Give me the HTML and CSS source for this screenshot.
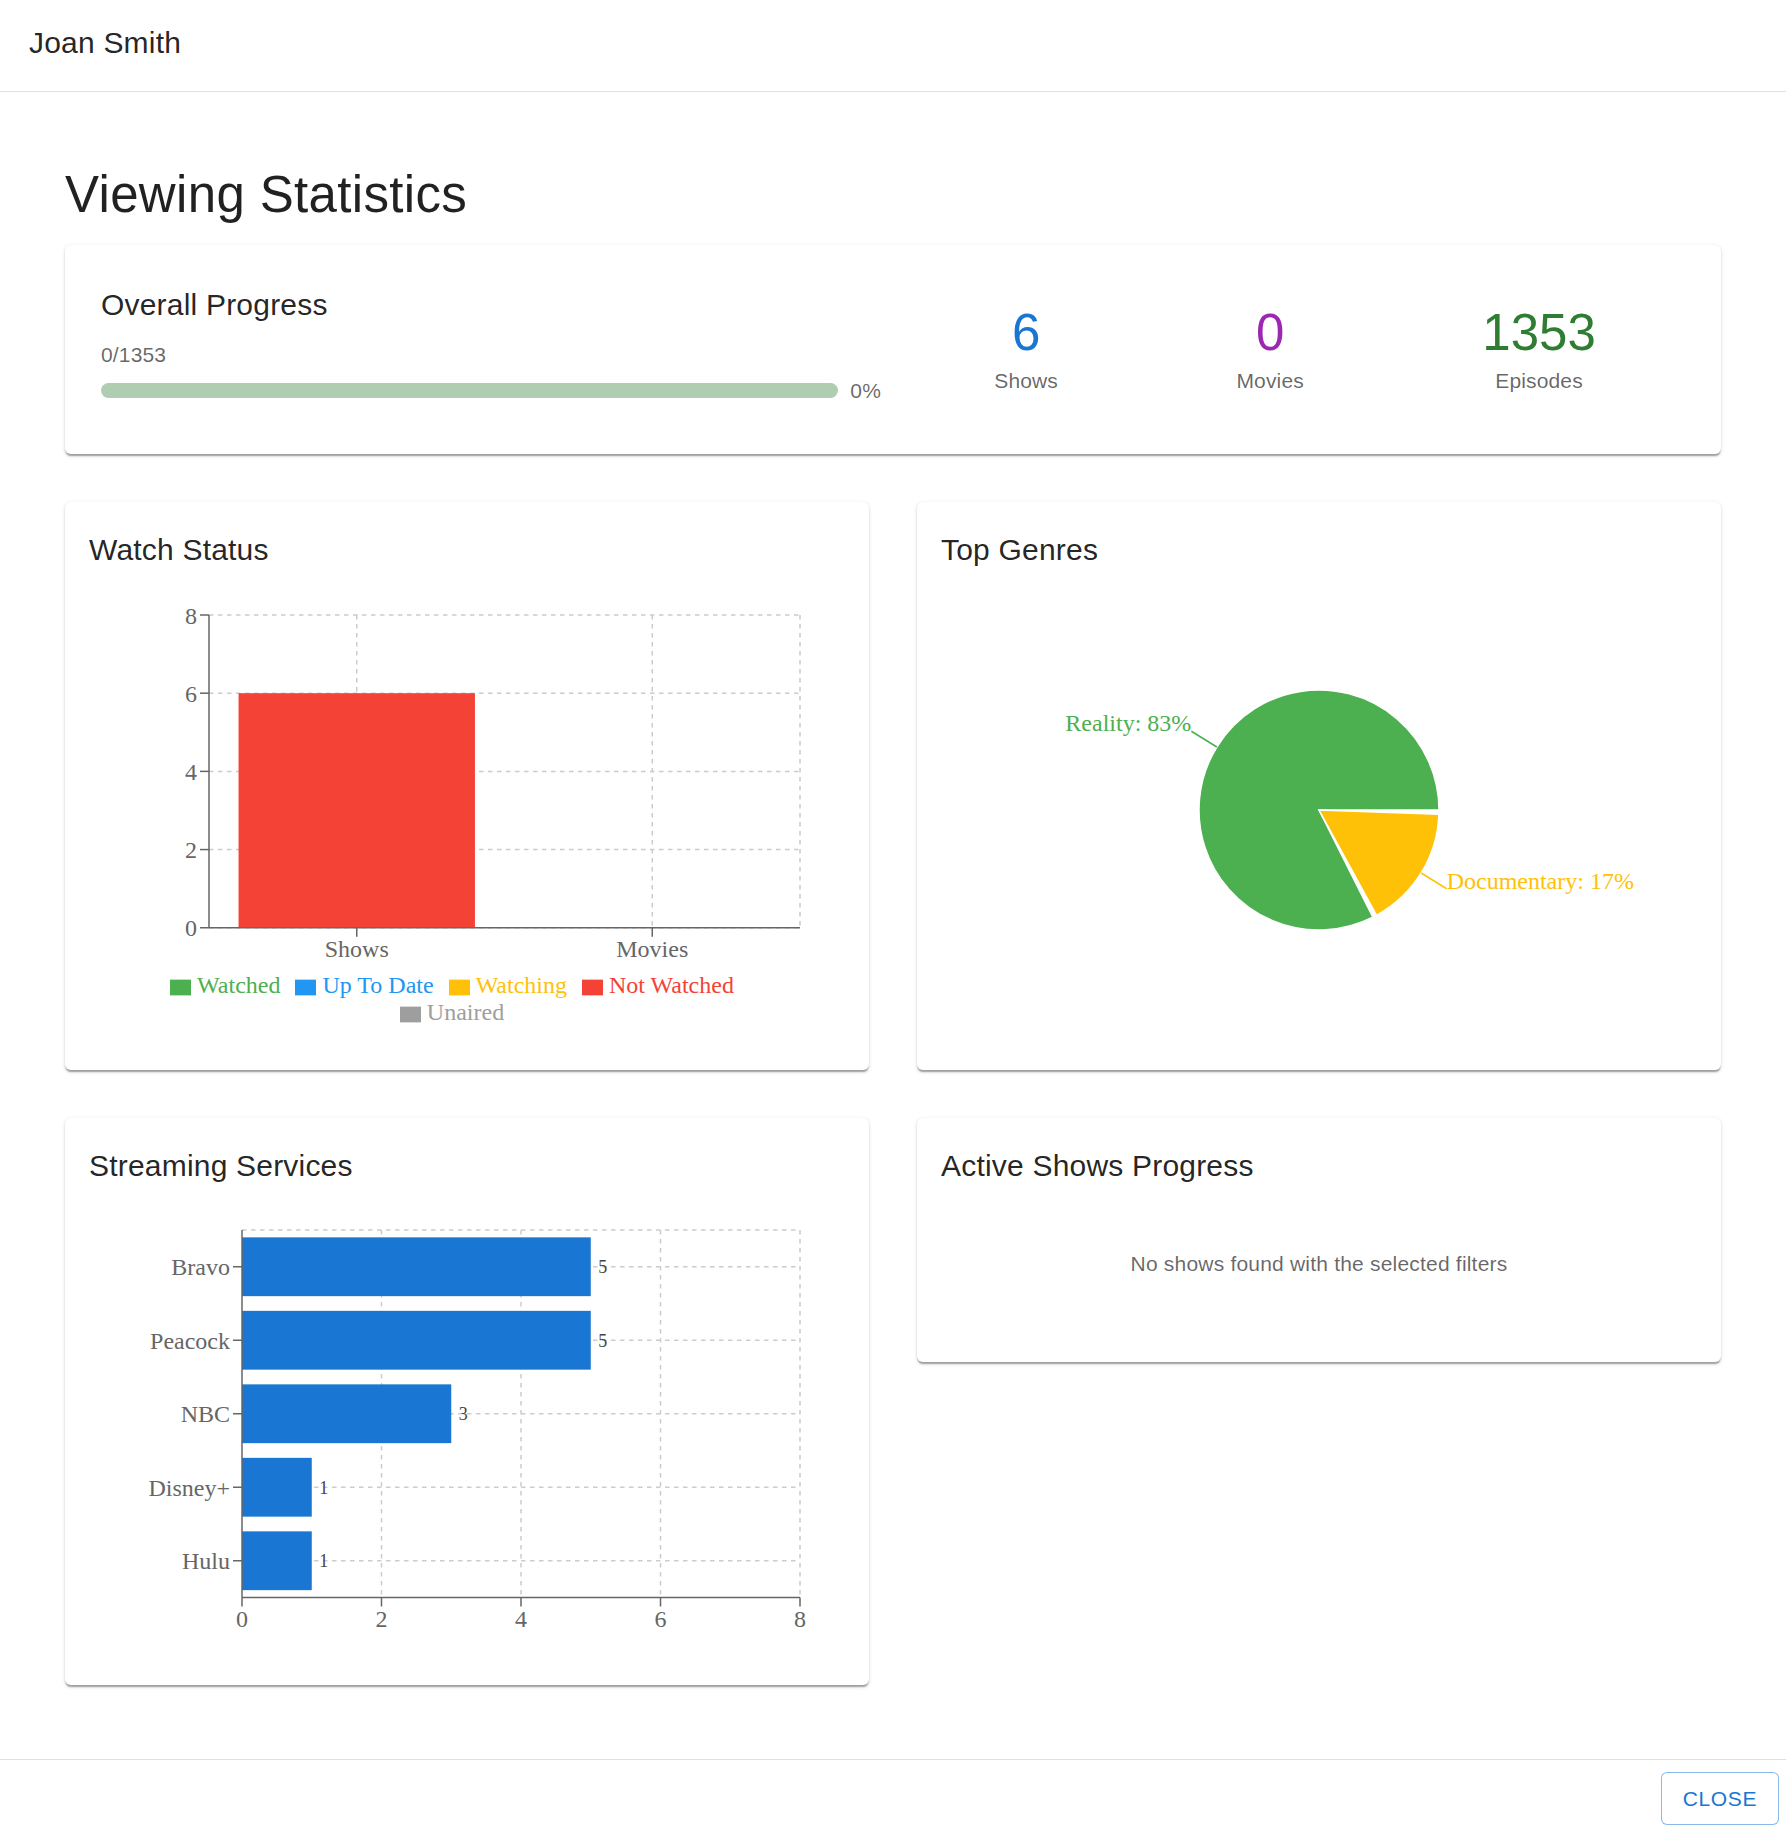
FILE: index.html
```html
<!DOCTYPE html>
<html lang="en">
<head>
<meta charset="utf-8">
<title>Joan Smith - Viewing Statistics</title>
<link rel="stylesheet" href="styles.css">
</head>
<body>
<div class="dialog">
  <header class="dlg-header">
    <h2 class="dlg-title">Joan Smith</h2>
  </header>

  <main class="dlg-content">
    <h1 class="page-title">Viewing Statistics</h1>

    <section class="card overall">
      <div class="overall-left">
        <h3 class="card-title">Overall Progress</h3>
        <div class="muted">0/1353</div>
        <div class="progress-row">
          <div class="progress-track"></div>
          <span class="muted pct">0%</span>
        </div>
      </div>
      <div class="overall-stats">
        <div class="stat">
          <div class="stat-num c-blue">6</div>
          <div class="muted">Shows</div>
        </div>
        <div class="stat">
          <div class="stat-num c-purple">0</div>
          <div class="muted">Movies</div>
        </div>
        <div class="stat">
          <div class="stat-num c-green">1353</div>
          <div class="muted">Episodes</div>
        </div>
      </div>
    </section>

    <div class="grid">
      <!-- Watch Status -->
      <section class="card chart-card">
        <h3 class="card-title">Watch Status</h3>
        <div class="chart-wrap">
          <svg class="plot-watch" viewBox="0 0 504 258.5">
            <g class="grid-lines">
              <line x1="80" y1="228.5" x2="474" y2="228.5"/>
              <line x1="80" y1="176.375" x2="474" y2="176.375"/>
              <line x1="80" y1="124.25" x2="474" y2="124.25"/>
              <line x1="80" y1="72.125" x2="474" y2="72.125"/>
              <line x1="80" y1="20" x2="474" y2="20"/>
              <line x1="178.5" y1="20" x2="178.5" y2="228.5"/>
              <line x1="375.5" y1="20" x2="375.5" y2="228.5"/>
              <line x1="474" y1="20" x2="474" y2="228.5"/>
            </g>
            <rect x="99.7" y="72.125" width="157.6" height="156.375" fill="#F44336"/>
            <g class="axis-lines">
              <line x1="80" y1="20" x2="80" y2="228.5"/>
              <line x1="74" y1="228.5" x2="80" y2="228.5"/>
              <line x1="74" y1="176.375" x2="80" y2="176.375"/>
              <line x1="74" y1="124.25" x2="80" y2="124.25"/>
              <line x1="74" y1="72.125" x2="80" y2="72.125"/>
              <line x1="74" y1="20" x2="80" y2="20"/>
              <line x1="80" y1="228.5" x2="474" y2="228.5"/>
              <line x1="178.5" y1="228.5" x2="178.5" y2="234.5"/>
              <line x1="375.5" y1="228.5" x2="375.5" y2="234.5"/>
            </g>
            <g class="tick-text end">
              <text x="72" y="228.5" dy="0.355em">0</text>
              <text x="72" y="176.375" dy="0.355em">2</text>
              <text x="72" y="124.25" dy="0.355em">4</text>
              <text x="72" y="72.125" dy="0.355em">6</text>
              <text x="72" y="20" dy="0.355em">8</text>
            </g>
            <g class="tick-text mid">
              <text x="178.5" y="236.5" dy="0.71em">Shows</text>
              <text x="375.5" y="236.5" dy="0.71em">Movies</text>
            </g>
          </svg>
          <ul class="legend"><li><svg class="legend-icon" viewBox="0 0 32 32"><path d="M0,4h32v24h-32z" fill="#4CAF50"/></svg><span class="lg-green">Watched</span></li><li><svg class="legend-icon" viewBox="0 0 32 32"><path d="M0,4h32v24h-32z" fill="#2196F3"/></svg><span class="lg-blue">Up To Date</span></li><li><svg class="legend-icon" viewBox="0 0 32 32"><path d="M0,4h32v24h-32z" fill="#FFC107"/></svg><span class="lg-amber">Watching</span></li><li><svg class="legend-icon" viewBox="0 0 32 32"><path d="M0,4h32v24h-32z" fill="#F44336"/></svg><span class="lg-red">Not Watched</span></li><li><svg class="legend-icon" viewBox="0 0 32 32"><path d="M0,4h32v24h-32z" fill="#9E9E9E"/></svg><span class="lg-grey">Unaired</span></li></ul>
        </div>
      </section>

      <!-- Top Genres -->
      <section class="card chart-card">
        <h3 class="card-title">Top Genres</h3>
        <div class="chart-wrap">
          <svg class="plot-full" viewBox="0 0 504 300">
            <path class="sector" d="M332,150 A80,80 0 1 0 287.9,221.49 L252,150 Z" fill="#4CAF50"/>
            <path class="sector" d="M290.38,220.19 A80,80 0 0 0 331.95,152.79 L252,150 Z" fill="#FFC107"/>
            <path class="label-line" d="M183.9,108.0 L166.9,97.5" stroke="#4CAF50"/>
            <path class="label-line" d="M320.1,192.0 L337.1,202.5" stroke="#FFC107"/>
            <text class="pie-label" x="166.9" y="97.5" text-anchor="end" fill="#4CAF50">Reality: 83%</text>
            <text class="pie-label" x="337.1" y="202.5" text-anchor="start" fill="#FFC107">Documentary: 17%</text>
          </svg>
        </div>
      </section>

      <!-- Streaming Services -->
      <section class="card chart-card">
        <h3 class="card-title">Streaming Services</h3>
        <div class="chart-wrap">
          <svg class="plot-full" viewBox="0 0 504 300">
            <g class="grid-lines">
              <line x1="102" y1="20" x2="474" y2="20"/>
              <line x1="102" y1="44.5" x2="474" y2="44.5"/>
              <line x1="102" y1="93.5" x2="474" y2="93.5"/>
              <line x1="102" y1="142.5" x2="474" y2="142.5"/>
              <line x1="102" y1="191.5" x2="474" y2="191.5"/>
              <line x1="102" y1="240.5" x2="474" y2="240.5"/>
              <line x1="195" y1="20" x2="195" y2="265"/>
              <line x1="288" y1="20" x2="288" y2="265"/>
              <line x1="381" y1="20" x2="381" y2="265"/>
              <line x1="474" y1="20" x2="474" y2="265"/>
            </g>
            <g fill="#1976d2">
              <rect x="102" y="24.9" width="232.5" height="39.2"/>
              <rect x="102" y="73.9" width="232.5" height="39.2"/>
              <rect x="102" y="122.9" width="139.5" height="39.2"/>
              <rect x="102" y="171.9" width="46.5" height="39.2"/>
              <rect x="102" y="220.9" width="46.5" height="39.2"/>
            </g>
            <g class="value-text">
              <text x="339.5" y="44.5" dy="0.355em">5</text>
              <text x="339.5" y="93.5" dy="0.355em">5</text>
              <text x="246.5" y="142.5" dy="0.355em">3</text>
              <text x="153.5" y="191.5" dy="0.355em">1</text>
              <text x="153.5" y="240.5" dy="0.355em">1</text>
            </g>
            <g class="axis-lines">
              <line x1="102" y1="20" x2="102" y2="265"/>
              <line x1="96" y1="44.5" x2="102" y2="44.5"/>
              <line x1="96" y1="93.5" x2="102" y2="93.5"/>
              <line x1="96" y1="142.5" x2="102" y2="142.5"/>
              <line x1="96" y1="191.5" x2="102" y2="191.5"/>
              <line x1="96" y1="240.5" x2="102" y2="240.5"/>
              <line x1="102" y1="265" x2="474" y2="265"/>
              <line x1="102" y1="265" x2="102" y2="271"/>
              <line x1="195" y1="265" x2="195" y2="271"/>
              <line x1="288" y1="265" x2="288" y2="271"/>
              <line x1="381" y1="265" x2="381" y2="271"/>
              <line x1="474" y1="265" x2="474" y2="271"/>
            </g>
            <g class="tick-text end">
              <text x="94" y="44.5" dy="0.355em">Bravo</text>
              <text x="94" y="93.5" dy="0.355em">Peacock</text>
              <text x="94" y="142.5" dy="0.355em">NBC</text>
              <text x="94" y="191.5" dy="0.355em">Disney+</text>
              <text x="94" y="240.5" dy="0.355em">Hulu</text>
            </g>
            <g class="tick-text mid">
              <text x="102" y="273" dy="0.71em">0</text>
              <text x="195" y="273" dy="0.71em">2</text>
              <text x="288" y="273" dy="0.71em">4</text>
              <text x="381" y="273" dy="0.71em">6</text>
              <text x="474" y="273" dy="0.71em">8</text>
            </g>
          </svg>
        </div>
      </section>

      <!-- Active Shows Progress -->
      <section class="card info-card">
        <h3 class="card-title">Active Shows Progress</h3>
        <p class="empty-msg">No shows found with the selected filters</p>
      </section>
    </div>
  </main>

  <footer class="dlg-actions">
    <button class="btn-outlined" type="button">Close</button>
  </footer>
</div>
</body>
</html>
```

FILE: styles.css
```css
* { box-sizing: border-box; }

html, body {
  margin: 0;
  padding: 0;
  height: 100%;
  background: #fff;
  overflow: hidden;
}

body {
  font-family: "Liberation Sans", Arial, Helvetica, sans-serif;
  color: rgba(0, 0, 0, 0.87);
}

.dialog {
  height: 100vh;
  display: flex;
  flex-direction: column;
}

/* ---------- header ---------- */
.dlg-header {
  flex-shrink: 0;
  padding: 19px 29px 24px;
  border-bottom: 1px solid #e0e0e0;
}

.dlg-title {
  margin: 0;
  font-size: 30px;
  line-height: 48px;
  font-weight: 400;
  letter-spacing: 0.2px;
}

/* ---------- content ---------- */
.dlg-content {
  flex: 1;
  min-height: 0;
  overflow: hidden;
  padding: 71px 65px 0;
}

.page-title {
  margin: 0 0 19px;
  font-size: 51px;
  line-height: 63px;
  font-weight: 400;
  letter-spacing: 0.35px;
  color: rgba(0, 0, 0, 0.87);
}

.card {
  background: #fff;
  border-radius: 6px;
  box-shadow: 0 3px 1.5px -1.5px rgba(0, 0, 0, 0.2),
              0 1.5px 1.5px 0 rgba(0, 0, 0, 0.14),
              0 1.5px 4.5px 0 rgba(0, 0, 0, 0.12);
}

.card-title {
  margin: 0 0 10.5px;
  font-size: 30px;
  line-height: 48px;
  font-weight: 400;
  letter-spacing: 0.2px;
  color: rgba(0, 0, 0, 0.87);
}

.muted {
  font-size: 21px;
  line-height: 30px;
  letter-spacing: 0.15px;
  color: rgba(0, 0, 0, 0.6);
}

/* ---------- overall progress ---------- */
.overall {
  padding: 36px;
  display: flex;
  align-items: center;
  min-height: 209px;
}

.overall-left {
  width: 780px;
  flex-shrink: 0;
  padding-bottom: 12.5px;
}

.progress-row {
  display: flex;
  align-items: center;
  margin-top: 6px;
  height: 30px;
}

.progress-track {
  flex: 1;
  height: 15px;
  border-radius: 7.5px;
  background: #afcdb1;
}

.pct {
  margin-left: 12px;
}

.overall-stats {
  flex: 1;
  margin-left: 24px;
  display: flex;
  justify-content: space-around;
}

.stat {
  text-align: center;
}

.stat-num {
  font-size: 51px;
  line-height: 59px;
  margin-bottom: 4px;
}

.c-blue { color: #1976d2; }
.c-purple { color: #9c27b0; }
.c-green { color: #2e7d32; }

/* ---------- grid ---------- */
.grid {
  margin-top: 48px;
  display: grid;
  grid-template-columns: 1fr 1fr;
  column-gap: 48px;
  row-gap: 48px;
  align-items: start;
}

.chart-card {
  padding: 24px 24px 35px;
}

.chart-wrap {
  height: 450px;
  display: flex;
  flex-direction: column;
}

.plot-watch {
  display: block;
  width: 756px;
  height: 387.75px;
  flex-shrink: 0;
}

.plot-full {
  display: block;
  width: 756px;
  height: 450px;
}

.grid-lines line {
  stroke: #ccc;
  stroke-width: 1;
  stroke-dasharray: 3 3;
  fill: none;
}

.axis-lines line {
  stroke: #666;
  stroke-width: 1;
}

.tick-text text {
  font-family: "Liberation Serif", "Times New Roman", serif;
  font-size: 16px;
  fill: #666;
}

.tick-text.end text { text-anchor: end; }
.tick-text.mid text { text-anchor: middle; }

.value-text text {
  font-family: "Liberation Serif", "Times New Roman", serif;
  font-size: 12px;
  fill: #444;
  text-anchor: start;
}

.sector {
  stroke: #fff;
  stroke-width: 1;
}

.label-line {
  fill: none;
  stroke-width: 1;
}

.pie-label {
  font-family: "Liberation Serif", "Times New Roman", serif;
  font-size: 16px;
}

/* legend */
.legend {
  list-style: none;
  margin: 0 45px 0 30px;
  padding: 0;
  text-align: center;
  font-family: "Liberation Serif", "Times New Roman", serif;
  font-size: 24px;
}

.legend li {
  display: inline-block;
  margin-right: 15px;
}

.legend-icon {
  display: inline-block;
  vertical-align: middle;
  width: 21px;
  height: 21px;
  margin-right: 6px;
}

.lg-green { color: #4CAF50; }
.lg-blue { color: #2196F3; }
.lg-amber { color: #FFC107; }
.lg-red { color: #F44336; }
.lg-grey { color: #9E9E9E; }

/* active shows */
.info-card {
  padding: 24px;
}

.empty-msg {
  margin: 0;
  padding: 49px 0 59px;
  text-align: center;
  font-size: 21px;
  line-height: 30px;
  letter-spacing: 0.2px;
  color: rgba(0, 0, 0, 0.6);
}

/* ---------- footer ---------- */
.dlg-actions {
  flex-shrink: 0;
  height: 69px;
  border-top: 1px solid #e0e0e0;
  padding: 12px 7px 0;
  display: flex;
  justify-content: flex-end;
  align-items: flex-start;
  overflow: hidden;
}

.btn-outlined {
  font-family: "Liberation Sans", Arial, Helvetica, sans-serif;
  font-size: 21px;
  font-weight: 400;
  line-height: 39px;
  letter-spacing: 0.6px;
  text-transform: uppercase;
  color: #1976d2;
  background: #fff;
  border: 1.5px solid rgba(25, 118, 210, 0.5);
  border-radius: 6px;
  padding: 6px 21px;
  min-width: 96px;
  cursor: pointer;
}
```
